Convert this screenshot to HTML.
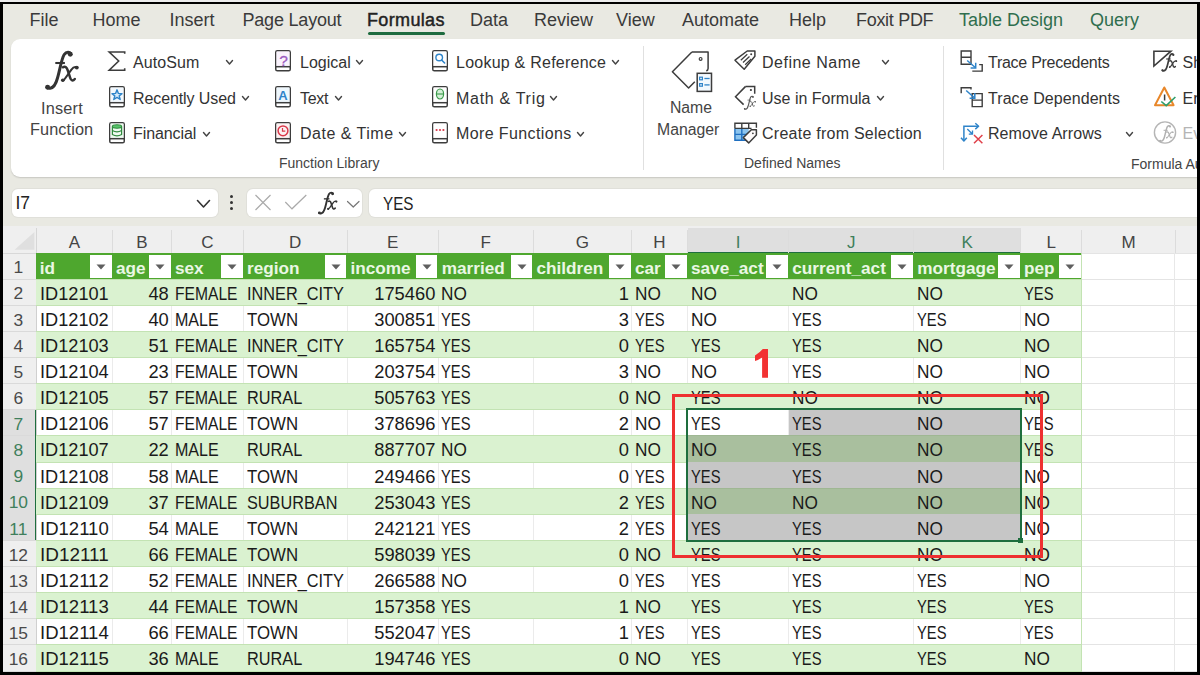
<!DOCTYPE html><html><head><meta charset="utf-8"><style>
*{box-sizing:border-box;margin:0;padding:0}
html,body{width:1200px;height:675px;overflow:hidden;background:#000;font-family:"Liberation Sans",sans-serif}
.a{position:absolute}
#app{position:absolute;left:3px;top:4px;width:1194px;height:668px;background:#e9e9e2;overflow:hidden}
.tab{position:absolute;height:34px;line-height:34px;font-size:18px;color:#3a3a3a;white-space:nowrap}
.rt{position:absolute;font-size:16px;color:#333;white-space:nowrap;line-height:20px}
.gl{position:absolute;font-size:14px;color:#444;white-space:nowrap;line-height:16px}
.c{position:absolute;font-size:17.8px;color:#1a1a1a;white-space:nowrap;line-height:26px;height:26px}
.c span{display:inline-block}
.hd{position:absolute;font-size:17.2px;font-weight:bold;color:#eaf7e4;white-space:nowrap;line-height:26px}
.ch{position:absolute;font-size:17px;color:#444;text-align:center;line-height:25px}
.rh{position:absolute;font-size:17.4px;color:#4a4a4a;text-align:center;line-height:26px}
svg{position:absolute;overflow:visible}
</style></head><body>
<div class="a" style="left:0;top:0;width:1200px;height:2px;background:#ececec"></div>
<div id="app">

<div class="tab" style="left:26.50px;top:-1.00px;">File</div>
<div class="tab" style="left:89.50px;top:-1.00px;">Home</div>
<div class="tab" style="left:166.50px;top:-1.00px;">Insert</div>
<div class="tab" style="left:239.50px;top:-1.00px;letter-spacing:-0.2px;">Page Layout</div>
<div class="tab" style="left:364.00px;top:-1.00px;color:#222;-webkit-text-stroke:0.45px #222;letter-spacing:0.35px;">Formulas</div>
<div class="tab" style="left:467.00px;top:-1.00px;">Data</div>
<div class="tab" style="left:531.00px;top:-1.00px;">Review</div>
<div class="tab" style="left:613.00px;top:-1.00px;">View</div>
<div class="tab" style="left:679.00px;top:-1.00px;">Automate</div>
<div class="tab" style="left:786.00px;top:-1.00px;">Help</div>
<div class="tab" style="left:853.00px;top:-1.00px;letter-spacing:-0.3px;">Foxit PDF</div>
<div class="tab" style="left:956.00px;top:-1.00px;color:#2f6e4e;">Table Design</div>
<div class="tab" style="left:1087.00px;top:-1.00px;color:#2f6e4e;">Query</div>
<div class="a" style="left:365.00px;top:28.20px;width:77.30px;height:2.80px;background:#1e6b3f;border-radius:2px"></div>
<div class="a" style="left:8.00px;top:35.00px;width:1289.00px;height:137.80px;background:#fff;border-radius:9px;box-shadow:0 1px 1.5px rgba(0,0,0,.15)"></div>
<svg style="left:37.00px;top:42.00px" width="44.00" height="46.00" viewBox="0 0 44 46"><path d="M30.6 8.2 C30 5.8 26.5 5.2 24.2 8.5 C21.6 12.5 19.8 24 17.5 32 C15.8 38.5 13.5 41.8 10.2 42.2 C8.6 42.4 7.5 41.8 7.2 41.2" fill="none" stroke="#333" stroke-width="2.9899999999999998" stroke-linecap="round"/><circle cx="30.3" cy="8.2" r="2.4699999999999998" fill="#333"/><circle cx="7.6" cy="41.2" r="2.4699999999999998" fill="#333"/><path d="M15.3 17 H24.9" stroke="#333" stroke-width="2.08"/><path d="M22.8 21.3 C25.5 20 26.8 21.5 27.8 24.5 L30.2 31.8 C31 34.5 32.8 35.4 34.8 33" fill="none" stroke="#333" stroke-width="2.4699999999999998" stroke-linecap="round"/><path d="M37 21.5 C35 20.3 33.2 21.2 31.2 23.8 L25.8 31.5 C24.5 33.6 23.3 34.8 22.3 34.2" fill="none" stroke="#333" stroke-width="2.08" stroke-linecap="round"/><circle cx="36.8" cy="21.6" r="1.9500000000000002" fill="#333"/><circle cx="22.8" cy="34.3" r="1.8199999999999998" fill="#333"/></svg>
<div class="rt" style="left:37.00px;top:93.50px;font-size:16.3px;color:#444;width:44px;text-align:center;letter-spacing:0.2px">Insert</div>
<div class="rt" style="left:27.00px;top:114.50px;font-size:16.3px;color:#444;letter-spacing:0.1px">Function</div>
<svg style="left:103.00px;top:45.00px" width="22" height="24" viewBox="106 49 22 24"><path d="M124.7 53.8 V52 H109.2 L118.7 61 L109.2 70.2 H124.7 V68.2" fill="none" stroke="#3d3d3d" stroke-width="1.6" stroke-linejoin="miter"/></svg>
<div class="rt" style="left:130.00px;top:48.80px;letter-spacing:0.1px">AutoSum</div>
<svg style="left:221.00px;top:54.30px" width="11" height="8.5" viewBox="224 58.3 11 8.5"><path d="M226.5 60.8 L229.5 64.3 L232.5 60.8" fill="none" stroke="#444" stroke-width="1.4" stroke-linecap="round" stroke-linejoin="round"/></svg>
<svg style="left:104.80px;top:81.00px" width="18.0" height="23.5" viewBox="107.8 85 18.0 23.5"><rect x="109.55" y="86.75" width="14.5" height="20.0" rx="1.6" fill="#fff" stroke="#3d3d3d" stroke-width="1.5"/><rect x="110.3" y="87.5" width="13.0" height="15.2" fill="#f3f9fe"/><path d="M109.55 102.7 H124.05" stroke="#3d3d3d" stroke-width="1.5"/><path d="M116.8 89.8 L118.2 93.4 L121.8 93.6 L119 95.9 L120 99.5 L116.8 97.4 L113.6 99.5 L114.6 95.9 L111.8 93.6 L115.4 93.4 Z" fill="#d7ecfb" stroke="#2f84c9" stroke-width="1.4" stroke-linejoin="round"/></svg>
<div class="rt" style="left:130.00px;top:84.80px;letter-spacing:-0.1px">Recently Used</div>
<svg style="left:237.00px;top:90.30px" width="11" height="8.5" viewBox="240 94.3 11 8.5"><path d="M242.5 96.8 L245.5 100.3 L248.5 96.8" fill="none" stroke="#444" stroke-width="1.4" stroke-linecap="round" stroke-linejoin="round"/></svg>
<svg style="left:104.80px;top:116.80px" width="18.0" height="23.500000000000014" viewBox="107.8 120.8 18.0 23.500000000000014"><rect x="109.55" y="122.55" width="14.5" height="20.000000000000014" rx="1.6" fill="#fff" stroke="#3d3d3d" stroke-width="1.5"/><rect x="110.3" y="123.3" width="13.0" height="15.200000000000014" fill="#eefaf0"/><path d="M109.55 138.5 H124.05" stroke="#3d3d3d" stroke-width="1.5"/><ellipse cx="116.8" cy="126.3" rx="4.6" ry="1.7" fill="#58c46a" stroke="#2f8a3d" stroke-width="1.1"/><path d="M112.2 126.3 V134.2 Q116.8 137 121.4 134.2 V126.3 M112.2 130.3 Q116.8 133 121.4 130.3" fill="none" stroke="#2f8a3d" stroke-width="1.2"/></svg>
<div class="rt" style="left:130.00px;top:119.80px;letter-spacing:-0.1px">Financial</div>
<svg style="left:198.00px;top:125.80px" width="11" height="8.5" viewBox="201 129.8 11 8.5"><path d="M203.5 132.3 L206.5 135.8 L209.5 132.3" fill="none" stroke="#444" stroke-width="1.4" stroke-linecap="round" stroke-linejoin="round"/></svg>
<svg style="left:271.10px;top:45.20px" width="18.0" height="23.5" viewBox="274.1 49.2 18.0 23.5"><rect x="275.85" y="50.95" width="14.5" height="20.0" rx="1.6" fill="#fff" stroke="#3d3d3d" stroke-width="1.5"/><rect x="276.6" y="51.7" width="13.0" height="15.2" fill="#faf3fd"/><path d="M275.85 66.9 H290.35" stroke="#3d3d3d" stroke-width="1.5"/><text x="283.6" y="66" text-anchor="middle" font-size="15.5" font-family="Liberation Sans" fill="#9a5bc0" stroke="#9a5bc0" stroke-width="0.3">?</text></svg>
<div class="rt" style="left:297.00px;top:48.80px;">Logical</div>
<svg style="left:351.00px;top:54.30px" width="11" height="8.5" viewBox="354 58.3 11 8.5"><path d="M356.5 60.8 L359.5 64.3 L362.5 60.8" fill="none" stroke="#444" stroke-width="1.4" stroke-linecap="round" stroke-linejoin="round"/></svg>
<svg style="left:271.10px;top:81.20px" width="18.0" height="23.5" viewBox="274.1 85.2 18.0 23.5"><rect x="275.85" y="86.95" width="14.5" height="20.0" rx="1.6" fill="#fff" stroke="#3d3d3d" stroke-width="1.5"/><rect x="276.6" y="87.7" width="13.0" height="15.2" fill="#eef7fd"/><path d="M275.85 102.9 H290.35" stroke="#3d3d3d" stroke-width="1.5"/><text x="283.1" y="100.6" text-anchor="middle" font-size="13" font-weight="bold" font-family="Liberation Sans" fill="#2f84c9">A</text></svg>
<div class="rt" style="left:297.00px;top:84.80px;letter-spacing:-0.3px">Text</div>
<svg style="left:330.00px;top:90.30px" width="11" height="8.5" viewBox="333 94.3 11 8.5"><path d="M335.5 96.8 L338.5 100.3 L341.5 96.8" fill="none" stroke="#444" stroke-width="1.4" stroke-linecap="round" stroke-linejoin="round"/></svg>
<svg style="left:271.10px;top:117.20px" width="18.0" height="23.499999999999986" viewBox="274.1 121.2 18.0 23.499999999999986"><rect x="275.85" y="122.95" width="14.5" height="19.999999999999986" rx="1.6" fill="#fff" stroke="#3d3d3d" stroke-width="1.5"/><rect x="276.6" y="123.7" width="13.0" height="15.199999999999985" fill="#fdf1f2"/><path d="M275.85 138.89999999999998 H290.35" stroke="#3d3d3d" stroke-width="1.5"/><circle cx="283.1" cy="131" r="4.9" fill="none" stroke="#d9394a" stroke-width="1.5"/><path d="M282.6 128.2 V131.4 H285.4" fill="none" stroke="#d9394a" stroke-width="1.2"/></svg>
<div class="rt" style="left:297.00px;top:119.80px;letter-spacing:0.5px">Date &amp; Time</div>
<svg style="left:394.00px;top:125.80px" width="11" height="8.5" viewBox="397 129.8 11 8.5"><path d="M399.5 132.3 L402.5 135.8 L405.5 132.3" fill="none" stroke="#444" stroke-width="1.4" stroke-linecap="round" stroke-linejoin="round"/></svg>
<svg style="left:427.60px;top:45.10px" width="18.0" height="23.499999999999993" viewBox="430.6 49.1 18.0 23.499999999999993"><rect x="432.35" y="50.85" width="14.5" height="19.999999999999993" rx="1.6" fill="#fff" stroke="#3d3d3d" stroke-width="1.5"/><rect x="433.1" y="51.6" width="13.0" height="15.199999999999992" fill="#fff"/><path d="M432.35 66.8 H446.85" stroke="#3d3d3d" stroke-width="1.5"/><circle cx="438.8" cy="57.6" r="3.3" fill="none" stroke="#2f84c9" stroke-width="1.4"/><path d="M441.2 60.1 L444.2 63.1" stroke="#2f84c9" stroke-width="1.6" stroke-linecap="round"/></svg>
<div class="rt" style="left:453.00px;top:48.80px;letter-spacing:0.24px">Lookup &amp; Reference</div>
<svg style="left:607.00px;top:54.30px" width="11" height="8.5" viewBox="610 58.3 11 8.5"><path d="M612.5 60.8 L615.5 64.3 L618.5 60.8" fill="none" stroke="#444" stroke-width="1.4" stroke-linecap="round" stroke-linejoin="round"/></svg>
<svg style="left:427.60px;top:80.80px" width="18.0" height="23.5" viewBox="430.6 84.8 18.0 23.5"><rect x="432.35" y="86.55" width="14.5" height="20.0" rx="1.6" fill="#fff" stroke="#3d3d3d" stroke-width="1.5"/><rect x="433.1" y="87.3" width="13.0" height="15.2" fill="#fff"/><path d="M432.35 102.5 H446.85" stroke="#3d3d3d" stroke-width="1.5"/><ellipse cx="439.6" cy="93.8" rx="3.6" ry="5" fill="#d5f0d8" stroke="#3a9a4a" stroke-width="1.2"/><path d="M436 93.8 H443.2" stroke="#3a9a4a" stroke-width="1.1"/></svg>
<div class="rt" style="left:453.00px;top:84.80px;letter-spacing:0.7px">Math &amp; Trig</div>
<svg style="left:545.00px;top:90.30px" width="11" height="8.5" viewBox="548 94.3 11 8.5"><path d="M550.5 96.8 L553.5 100.3 L556.5 96.8" fill="none" stroke="#444" stroke-width="1.4" stroke-linecap="round" stroke-linejoin="round"/></svg>
<svg style="left:427.60px;top:116.80px" width="18.0" height="23.500000000000014" viewBox="430.6 120.8 18.0 23.500000000000014"><rect x="432.35" y="122.55" width="14.5" height="20.000000000000014" rx="1.6" fill="#fff" stroke="#3d3d3d" stroke-width="1.5"/><rect x="433.1" y="123.3" width="13.0" height="15.200000000000014" fill="#fff"/><path d="M432.35 138.5 H446.85" stroke="#3d3d3d" stroke-width="1.5"/><circle cx="436.2" cy="129.8" r="1.1" fill="#d9394a"/><circle cx="439.6" cy="129.8" r="1.1" fill="#d9394a"/><circle cx="443" cy="129.8" r="1.1" fill="#d9394a"/></svg>
<div class="rt" style="left:453.00px;top:119.80px;letter-spacing:0.38px">More Functions</div>
<svg style="left:572.00px;top:125.80px" width="11" height="8.5" viewBox="575 129.8 11 8.5"><path d="M577.5 132.3 L580.5 135.8 L583.5 132.3" fill="none" stroke="#444" stroke-width="1.4" stroke-linecap="round" stroke-linejoin="round"/></svg>
<div class="gl" style="left:276.00px;top:151.00px;">Function Library</div>
<div class="a" style="left:640.00px;top:42.00px;width:1.00px;height:124.00px;background:#e0e0e0"></div>
<svg style="left:665.00px;top:44.00px" width="48" height="47" viewBox="668 48 48 47"><path d="M691.9 51.9 H708.1 V68.6 Q708.1 70.5 706.2 70.8" fill="none" stroke="#3d3d3d" stroke-width="1.5" stroke-linejoin="round"/><path d="M691.9 51.9 L672.4 71.8 L688.6 88 L694.8 81.7" fill="none" stroke="#3d3d3d" stroke-width="1.5" stroke-linejoin="round"/><circle cx="700.6" cy="58.9" r="1.4" fill="none" stroke="#3d3d3d" stroke-width="1.2"/><rect x="697.2" y="73.3" width="14.3" height="18.1" fill="#f3f9fe" stroke="#3d3d3d" stroke-width="1.5"/><rect x="699.6" y="77.2" width="2.8" height="2.6" fill="none" stroke="#2f84c9" stroke-width="1.2"/><path d="M704.4 78.5 H709.6" stroke="#2f84c9" stroke-width="1.3"/><rect x="699.6" y="83.6" width="2.8" height="2.6" fill="none" stroke="#2f84c9" stroke-width="1.2"/><path d="M704.4 84.9 H709.6" stroke="#2f84c9" stroke-width="1.3"/></svg>
<div class="rt" style="left:658.00px;top:94.00px;font-size:15.8px;color:#444;width:60px;text-align:center">Name</div>
<div class="rt" style="left:654.00px;top:116.00px;font-size:15.8px;color:#444">Manager</div>
<svg style="left:729.00px;top:44.00px" width="26" height="25" viewBox="732 48 26 25"><path d="M747.2 51 H754.9 V56.3 L744.2 69.2 L735 60.2 Z" fill="#fff" stroke="#3d3d3d" stroke-width="1.5" stroke-linejoin="round"/><circle cx="751.2" cy="54.3" r="1" fill="#3d3d3d"/><path d="M740.8 60.2 L747.3 54.2 M743 62.5 L749.5 56.5 M745.2 64.8 L751.2 59" stroke="#3d3d3d" stroke-width="1.25"/></svg>
<div class="rt" style="left:759.00px;top:48.80px;letter-spacing:0.5px">Define Name</div>
<svg style="left:877.00px;top:54.30px" width="11" height="8.5" viewBox="880 58.3 11 8.5"><path d="M882.5 60.8 L885.5 64.3 L888.5 60.8" fill="none" stroke="#444" stroke-width="1.4" stroke-linecap="round" stroke-linejoin="round"/></svg>
<svg style="left:729.00px;top:80.00px" width="28" height="26" viewBox="732 84 28 26"><path d="M745.6 86.4 H754.7 V93.8" fill="none" stroke="#3d3d3d" stroke-width="1.5" stroke-linejoin="miter"/><path d="M745.6 86.4 L735.5 96.7 L743.6 104.6" fill="none" stroke="#3d3d3d" stroke-width="1.5" stroke-linejoin="miter"/><circle cx="750.9" cy="90" r="1.1" fill="#3d3d3d"/></svg>
<svg style="left:739.00px;top:89.60px" width="15.84" height="16.56" viewBox="0 0 44 46"><path d="M30.6 8.2 C30 5.8 26.5 5.2 24.2 8.5 C21.6 12.5 19.8 24 17.5 32 C15.8 38.5 13.5 41.8 10.2 42.2 C8.6 42.4 7.5 41.8 7.2 41.2" fill="none" stroke="#555" stroke-width="3.105" stroke-linecap="round"/><circle cx="30.3" cy="8.2" r="2.4699999999999998" fill="#555"/><circle cx="7.6" cy="41.2" r="2.4699999999999998" fill="#555"/><path d="M15.3 17 H24.9" stroke="#555" stroke-width="2.16"/><path d="M22.8 21.3 C25.5 20 26.8 21.5 27.8 24.5 L30.2 31.8 C31 34.5 32.8 35.4 34.8 33" fill="none" stroke="#555" stroke-width="2.565" stroke-linecap="round"/><path d="M37 21.5 C35 20.3 33.2 21.2 31.2 23.8 L25.8 31.5 C24.5 33.6 23.3 34.8 22.3 34.2" fill="none" stroke="#555" stroke-width="2.16" stroke-linecap="round"/><circle cx="36.8" cy="21.6" r="1.9500000000000002" fill="#555"/><circle cx="22.8" cy="34.3" r="1.8199999999999998" fill="#555"/></svg>
<div class="rt" style="left:759.00px;top:84.80px;">Use in Formula</div>
<svg style="left:872.00px;top:90.30px" width="11" height="8.5" viewBox="875 94.3 11 8.5"><path d="M877.5 96.8 L880.5 100.3 L883.5 96.8" fill="none" stroke="#444" stroke-width="1.4" stroke-linecap="round" stroke-linejoin="round"/></svg>
<svg style="left:729.00px;top:116.00px" width="28" height="26" viewBox="732 120 28 26"><rect x="734.9" y="128.4" width="13.8" height="11.8" fill="#8cc4ee"/><path d="M734.9 128.4 V140.2 H746 M734.9 134.4 H748 M741.8 128.4 V140.2" fill="none" stroke="#1f6fc0" stroke-width="1.4"/><path d="M734.9 128.4 V123.3 H756.4 V127.8 M734.9 128.4 H751.5 M741.8 123.3 V128.4 M748.7 123.3 V128.4" fill="none" stroke="#3d3d3d" stroke-width="1.4"/><path d="M743.3 137.6 L751.3 129.8 H756.4 V135 L748.7 142.9 Z" fill="#fdfafa" stroke="#3d3d3d" stroke-width="1.5" stroke-linejoin="round"/><circle cx="752.9" cy="133.3" r="0.9" fill="#3d3d3d"/></svg>
<div class="rt" style="left:759.00px;top:119.80px;letter-spacing:0.25px">Create from Selection</div>
<div class="gl" style="left:741.00px;top:151.00px;">Defined Names</div>
<div class="a" style="left:940.00px;top:42.00px;width:1.00px;height:124.00px;background:#e0e0e0"></div>
<svg style="left:955.00px;top:44.00px" width="28" height="26" viewBox="958 48 28 26"><path d="M961.2 51 H971 V64.2 H961.2 Z M961.2 57.3 H971" fill="none" stroke="#3d3d3d" stroke-width="1.4"/><path d="M972.3 71.1 H982.2 V64.6 H979.2" fill="none" stroke="#3d3d3d" stroke-width="1.4"/><path d="M967.2 60.5 L975.3 67.5" stroke="#2f84c9" stroke-width="1.5"/><path d="M970.6 67.9 H975.7 V62.8" fill="none" stroke="#2f84c9" stroke-width="1.5"/></svg>
<div class="rt" style="left:985.00px;top:48.80px;letter-spacing:-0.27px">Trace Precedents</div>
<svg style="left:955.00px;top:80.00px" width="28" height="26" viewBox="958 84 28 26"><path d="M961.2 93.3 V87.7 H971 V89.5" fill="none" stroke="#3d3d3d" stroke-width="1.4"/><path d="M972.2 93.6 H982.2 V106.6 H972.2 Z M972.2 100.1 H982.2" fill="none" stroke="#3d3d3d" stroke-width="1.4"/><path d="M966.2 90.5 L974.4 97.8" stroke="#2f84c9" stroke-width="1.5"/><path d="M969.6 98.2 H974.8 V93" fill="none" stroke="#2f84c9" stroke-width="1.5"/></svg>
<div class="rt" style="left:985.00px;top:84.80px;letter-spacing:0.07px">Trace Dependents</div>
<svg style="left:954.00px;top:116.00px" width="29" height="26" viewBox="957 120 29 26"><path d="M963.9 140.5 V126.2 H978.3" fill="none" stroke="#2f84c9" stroke-width="1.5"/><path d="M961 137.8 L963.9 141 L966.8 137.8 M975.3 123.3 L978.6 126.2 L975.3 129.1" fill="none" stroke="#2f84c9" stroke-width="1.5" stroke-linejoin="round"/><path d="M967.3 129 L972.3 134 M968.8 134.2 H972.5 V130.5" fill="none" stroke="#2f84c9" stroke-width="1.3"/><path d="M974 135 L982.4 143.2 M982.4 135 L974 143.2" stroke="#e0404a" stroke-width="1.5"/></svg>
<div class="rt" style="left:985.00px;top:119.80px;letter-spacing:0.07px">Remove Arrows</div>
<svg style="left:1121.00px;top:125.80px" width="11" height="8.5" viewBox="1124 129.8 11 8.5"><path d="M1126.5 132.3 L1129.5 135.8 L1132.5 132.3" fill="none" stroke="#444" stroke-width="1.4" stroke-linecap="round" stroke-linejoin="round"/></svg>
<svg style="left:1147.00px;top:44.00px" width="30" height="28" viewBox="1150 48 30 28"><path d="M1153.9 51.2 H1170.9 L1153.9 66 Z" fill="none" stroke="#3d3d3d" stroke-width="1.6" stroke-linejoin="miter"/></svg>
<svg style="left:1155.60px;top:47.40px" width="20.68" height="21.62" viewBox="0 0 44 46"><path d="M30.6 8.2 C30 5.8 26.5 5.2 24.2 8.5 C21.6 12.5 19.8 24 17.5 32 C15.8 38.5 13.5 41.8 10.2 42.2 C8.6 42.4 7.5 41.8 7.2 41.2" fill="none" stroke="#3d3d3d" stroke-width="3.6799999999999997" stroke-linecap="round"/><circle cx="30.3" cy="8.2" r="2.4699999999999998" fill="#3d3d3d"/><circle cx="7.6" cy="41.2" r="2.4699999999999998" fill="#3d3d3d"/><path d="M15.3 17 H24.9" stroke="#3d3d3d" stroke-width="2.5600000000000005"/><path d="M22.8 21.3 C25.5 20 26.8 21.5 27.8 24.5 L30.2 31.8 C31 34.5 32.8 35.4 34.8 33" fill="none" stroke="#3d3d3d" stroke-width="3.04" stroke-linecap="round"/><path d="M37 21.5 C35 20.3 33.2 21.2 31.2 23.8 L25.8 31.5 C24.5 33.6 23.3 34.8 22.3 34.2" fill="none" stroke="#3d3d3d" stroke-width="2.5600000000000005" stroke-linecap="round"/><circle cx="36.8" cy="21.6" r="1.9500000000000002" fill="#3d3d3d"/><circle cx="22.8" cy="34.3" r="1.8199999999999998" fill="#3d3d3d"/></svg>
<div class="rt" style="left:1179.50px;top:48.80px;">Sh</div>
<svg style="left:1148.00px;top:80.00px" width="29" height="26" viewBox="1151 84 29 26"><path d="M1164.3 87.5 L1173.6 105.2 H1155 Z" fill="none" stroke="#e8872a" stroke-width="2" stroke-linejoin="round"/><path d="M1164.6 94.5 V100.5" stroke="#3d3d3d" stroke-width="1.5"/><path d="M1161.3 101.5 L1166.2 105.6 L1175.4 97" fill="none" stroke="#2e9e6b" stroke-width="1.6"/></svg>
<div class="rt" style="left:1179.50px;top:84.80px;">Er</div>
<svg style="left:1147.00px;top:114.00px" width="30" height="30" viewBox="1150 118 30 30"><circle cx="1165" cy="132.5" r="10.6" fill="none" stroke="#b5b5b5" stroke-width="1.4"/></svg>
<svg style="left:1154.40px;top:118.80px" width="18.92" height="19.78" viewBox="0 0 44 46"><path d="M30.6 8.2 C30 5.8 26.5 5.2 24.2 8.5 C21.6 12.5 19.8 24 17.5 32 C15.8 38.5 13.5 41.8 10.2 42.2 C8.6 42.4 7.5 41.8 7.2 41.2" fill="none" stroke="#b0b0b0" stroke-width="3.4499999999999997" stroke-linecap="round"/><circle cx="30.3" cy="8.2" r="2.4699999999999998" fill="#b0b0b0"/><circle cx="7.6" cy="41.2" r="2.4699999999999998" fill="#b0b0b0"/><path d="M15.3 17 H24.9" stroke="#b0b0b0" stroke-width="2.4000000000000004"/><path d="M22.8 21.3 C25.5 20 26.8 21.5 27.8 24.5 L30.2 31.8 C31 34.5 32.8 35.4 34.8 33" fill="none" stroke="#b0b0b0" stroke-width="2.8499999999999996" stroke-linecap="round"/><path d="M37 21.5 C35 20.3 33.2 21.2 31.2 23.8 L25.8 31.5 C24.5 33.6 23.3 34.8 22.3 34.2" fill="none" stroke="#b0b0b0" stroke-width="2.4000000000000004" stroke-linecap="round"/><circle cx="36.8" cy="21.6" r="1.9500000000000002" fill="#b0b0b0"/><circle cx="22.8" cy="34.3" r="1.8199999999999998" fill="#b0b0b0"/></svg>
<div class="rt" style="left:1179.50px;top:119.80px;color:#b5b5b5">Ev</div>
<div class="gl" style="left:1128.00px;top:152.00px;">Formula Auditing</div>
<div class="a" style="left:9.00px;top:184.50px;width:205.50px;height:28.50px;background:#fff;border-radius:6px;box-shadow:0 0 0 1px #e0e0da"></div>
<div class="rt" style="left:12.50px;top:188.50px;font-size:17.5px;color:#222;line-height:20px">I7</div>
<svg style="left:192.00px;top:193.80px" width="17" height="11.5" viewBox="195 197.8 17 11.5"><path d="M197.5 200.3 L203.5 206.8 L209.5 200.3" fill="none" stroke="#333" stroke-width="1.6" stroke-linecap="round" stroke-linejoin="round"/></svg>
<div class="a" style="left:227.40px;top:191.40px;width:3.00px;height:3.00px;background:#333;border-radius:50%"></div>
<div class="a" style="left:227.40px;top:197.00px;width:3.00px;height:3.00px;background:#333;border-radius:50%"></div>
<div class="a" style="left:227.40px;top:202.60px;width:3.00px;height:3.00px;background:#333;border-radius:50%"></div>
<div class="a" style="left:244.00px;top:184.50px;width:114.50px;height:28.50px;background:#fff;border-radius:6px;box-shadow:0 0 0 1px #e0e0da"></div>
<svg style="left:250.00px;top:189.00px" width="20" height="19" viewBox="253 193 20 19"><path d="M255.5 195 L270.5 210 M270.5 195 L255.5 210" stroke="#aaa" stroke-width="1.2"/></svg>
<svg style="left:280.00px;top:189.00px" width="25" height="18" viewBox="283 193 25 18"><path d="M285.3 202 L292 208.8 L306.3 195" fill="none" stroke="#aaa" stroke-width="1.2"/></svg>
<svg style="left:311.80px;top:184.80px" width="25.52" height="26.68" viewBox="0 0 44 46"><path d="M30.6 8.2 C30 5.8 26.5 5.2 24.2 8.5 C21.6 12.5 19.8 24 17.5 32 C15.8 38.5 13.5 41.8 10.2 42.2 C8.6 42.4 7.5 41.8 7.2 41.2" fill="none" stroke="#333" stroke-width="3.3349999999999995" stroke-linecap="round"/><circle cx="30.3" cy="8.2" r="2.4699999999999998" fill="#333"/><circle cx="7.6" cy="41.2" r="2.4699999999999998" fill="#333"/><path d="M15.3 17 H24.9" stroke="#333" stroke-width="2.32"/><path d="M22.8 21.3 C25.5 20 26.8 21.5 27.8 24.5 L30.2 31.8 C31 34.5 32.8 35.4 34.8 33" fill="none" stroke="#333" stroke-width="2.755" stroke-linecap="round"/><path d="M37 21.5 C35 20.3 33.2 21.2 31.2 23.8 L25.8 31.5 C24.5 33.6 23.3 34.8 22.3 34.2" fill="none" stroke="#333" stroke-width="2.32" stroke-linecap="round"/><circle cx="36.8" cy="21.6" r="1.9500000000000002" fill="#333"/><circle cx="22.8" cy="34.3" r="1.8199999999999998" fill="#333"/></svg>
<svg style="left:341.50px;top:194.50px" width="16.5" height="10.5" viewBox="344.5 198.5 16.5 10.5"><path d="M347.0 201.0 L352.75 206.5 L358.5 201.0" fill="none" stroke="#777" stroke-width="1.2" stroke-linecap="round" stroke-linejoin="round"/></svg>
<div class="a" style="left:366.00px;top:184.50px;width:881.00px;height:28.50px;background:#fff;border-radius:6px;box-shadow:0 0 0 1px #e0e0da"></div>
<div class="rt" style="left:380.00px;top:189.50px;font-size:17.5px;color:#222"><span style="display:inline-block;transform:scaleX(0.87);transform-origin:0 50%">YES</span></div>
<div class="a" style="left:0.00px;top:222.00px;width:1197.00px;height:27.00px;background:#efefef"></div>
<div class="a" style="left:0.00px;top:249.00px;width:33.30px;height:419.00px;background:#efefef"></div>
<div class="a" style="left:33.30px;top:249.00px;width:1163.70px;height:419.00px;background:#fff"></div>
<svg style="left:10.00px;top:226.00px" width="23" height="22" viewBox="13 230 23 22"><path d="M34.4 232 V249.8 H14.6 Z" fill="#dfdfdf"/></svg>
<div class="a" style="left:109.00px;top:226.00px;width:1.00px;height:23.00px;background:#dcdcdc"></div>
<div class="ch" style="left:33.30px;top:225.50px;width:76.20px;color:#444">A</div>
<div class="a" style="left:168.00px;top:226.00px;width:1.00px;height:23.00px;background:#dcdcdc"></div>
<div class="ch" style="left:109.50px;top:225.50px;width:59.00px;color:#444">B</div>
<div class="a" style="left:240.00px;top:226.00px;width:1.00px;height:23.00px;background:#dcdcdc"></div>
<div class="ch" style="left:168.50px;top:225.50px;width:72.00px;color:#444">C</div>
<div class="a" style="left:343.50px;top:226.00px;width:1.00px;height:23.00px;background:#dcdcdc"></div>
<div class="ch" style="left:240.50px;top:225.50px;width:103.50px;color:#444">D</div>
<div class="a" style="left:434.75px;top:226.00px;width:1.00px;height:23.00px;background:#dcdcdc"></div>
<div class="ch" style="left:344.00px;top:225.50px;width:91.25px;color:#444">E</div>
<div class="a" style="left:529.50px;top:226.00px;width:1.00px;height:23.00px;background:#dcdcdc"></div>
<div class="ch" style="left:435.25px;top:225.50px;width:94.75px;color:#444">F</div>
<div class="a" style="left:628.00px;top:226.00px;width:1.00px;height:23.00px;background:#dcdcdc"></div>
<div class="ch" style="left:530.00px;top:225.50px;width:98.50px;color:#444">G</div>
<div class="a" style="left:684.00px;top:226.00px;width:1.00px;height:23.00px;background:#dcdcdc"></div>
<div class="ch" style="left:628.50px;top:225.50px;width:56.00px;color:#444">H</div>
<div class="a" style="left:684.50px;top:223.50px;width:101.25px;height:25.50px;background:#dfdfdf"></div>
<div class="a" style="left:684.50px;top:247.50px;width:101.25px;height:1.50px;background:#1e6e3e"></div>
<div class="a" style="left:785.25px;top:226.00px;width:1.00px;height:23.00px;background:#dcdcdc"></div>
<div class="ch" style="left:684.50px;top:225.50px;width:101.25px;color:#3f7f5c">I</div>
<div class="a" style="left:785.75px;top:223.50px;width:125.00px;height:25.50px;background:#dfdfdf"></div>
<div class="a" style="left:785.75px;top:247.50px;width:125.00px;height:1.50px;background:#1e6e3e"></div>
<div class="a" style="left:910.25px;top:226.00px;width:1.00px;height:23.00px;background:#dcdcdc"></div>
<div class="ch" style="left:785.75px;top:225.50px;width:125.00px;color:#3f7f5c">J</div>
<div class="a" style="left:910.75px;top:223.50px;width:106.75px;height:25.50px;background:#dfdfdf"></div>
<div class="a" style="left:910.75px;top:247.50px;width:106.75px;height:1.50px;background:#1e6e3e"></div>
<div class="a" style="left:1017.00px;top:226.00px;width:1.00px;height:23.00px;background:#dcdcdc"></div>
<div class="ch" style="left:910.75px;top:225.50px;width:106.75px;color:#3f7f5c">K</div>
<div class="a" style="left:1078.25px;top:226.00px;width:1.00px;height:23.00px;background:#dcdcdc"></div>
<div class="ch" style="left:1017.50px;top:225.50px;width:61.25px;color:#444">L</div>
<div class="a" style="left:1172.00px;top:226.00px;width:1.00px;height:23.00px;background:#dcdcdc"></div>
<div class="ch" style="left:1078.75px;top:225.50px;width:93.75px;color:#444">M</div>
<div class="a" style="left:1266.50px;top:226.00px;width:1.00px;height:23.00px;background:#dcdcdc"></div>
<div class="ch" style="left:1172.50px;top:225.50px;width:94.50px;color:#444">N</div>
<div class="a" style="left:33.00px;top:224.00px;width:1.00px;height:25.00px;background:#d6d6d6"></div>
<div class="a" style="left:0.00px;top:248.50px;width:33.30px;height:1.00px;background:#d8d8d8"></div>
<div class="a" style="left:0.00px;top:274.62px;width:33.30px;height:1.00px;background:#dadada"></div>
<div class="rh" style="left:-1.20px;top:250.30px;width:33px;color:#4a4a4a">1</div>
<div class="a" style="left:0.00px;top:300.75px;width:33.30px;height:1.00px;background:#dadada"></div>
<div class="rh" style="left:-1.20px;top:276.43px;width:33px;color:#4a4a4a">2</div>
<div class="a" style="left:0.00px;top:326.88px;width:33.30px;height:1.00px;background:#dadada"></div>
<div class="rh" style="left:-1.20px;top:302.55px;width:33px;color:#4a4a4a">3</div>
<div class="a" style="left:0.00px;top:353.00px;width:33.30px;height:1.00px;background:#dadada"></div>
<div class="rh" style="left:-1.20px;top:328.68px;width:33px;color:#4a4a4a">4</div>
<div class="a" style="left:0.00px;top:379.12px;width:33.30px;height:1.00px;background:#dadada"></div>
<div class="rh" style="left:-1.20px;top:354.80px;width:33px;color:#4a4a4a">5</div>
<div class="a" style="left:0.00px;top:405.25px;width:33.30px;height:1.00px;background:#dadada"></div>
<div class="rh" style="left:-1.20px;top:380.93px;width:33px;color:#4a4a4a">6</div>
<div class="a" style="left:0.00px;top:405.75px;width:33.30px;height:26.12px;background:#dfdfdf"></div>
<div class="a" style="left:0.00px;top:431.38px;width:33.30px;height:1.00px;background:#dadada"></div>
<div class="rh" style="left:-1.20px;top:407.05px;width:33px;color:#3f7f5c">7</div>
<div class="a" style="left:0.00px;top:431.88px;width:33.30px;height:26.12px;background:#dfdfdf"></div>
<div class="a" style="left:0.00px;top:457.50px;width:33.30px;height:1.00px;background:#dadada"></div>
<div class="rh" style="left:-1.20px;top:433.18px;width:33px;color:#3f7f5c">8</div>
<div class="a" style="left:0.00px;top:458.00px;width:33.30px;height:26.12px;background:#dfdfdf"></div>
<div class="a" style="left:0.00px;top:483.62px;width:33.30px;height:1.00px;background:#dadada"></div>
<div class="rh" style="left:-1.20px;top:459.30px;width:33px;color:#3f7f5c">9</div>
<div class="a" style="left:0.00px;top:484.12px;width:33.30px;height:26.12px;background:#dfdfdf"></div>
<div class="a" style="left:0.00px;top:509.75px;width:33.30px;height:1.00px;background:#dadada"></div>
<div class="rh" style="left:-1.20px;top:485.43px;width:33px;color:#3f7f5c">10</div>
<div class="a" style="left:0.00px;top:510.25px;width:33.30px;height:26.12px;background:#dfdfdf"></div>
<div class="a" style="left:0.00px;top:535.88px;width:33.30px;height:1.00px;background:#dadada"></div>
<div class="rh" style="left:-1.20px;top:511.55px;width:33px;color:#3f7f5c">11</div>
<div class="a" style="left:0.00px;top:562.00px;width:33.30px;height:1.00px;background:#dadada"></div>
<div class="rh" style="left:-1.20px;top:537.67px;width:33px;color:#4a4a4a">12</div>
<div class="a" style="left:0.00px;top:588.12px;width:33.30px;height:1.00px;background:#dadada"></div>
<div class="rh" style="left:-1.20px;top:563.80px;width:33px;color:#4a4a4a">13</div>
<div class="a" style="left:0.00px;top:614.25px;width:33.30px;height:1.00px;background:#dadada"></div>
<div class="rh" style="left:-1.20px;top:589.92px;width:33px;color:#4a4a4a">14</div>
<div class="a" style="left:0.00px;top:640.38px;width:33.30px;height:1.00px;background:#dadada"></div>
<div class="rh" style="left:-1.20px;top:616.05px;width:33px;color:#4a4a4a">15</div>
<div class="a" style="left:0.00px;top:666.50px;width:33.30px;height:1.00px;background:#dadada"></div>
<div class="rh" style="left:-1.20px;top:642.17px;width:33px;color:#4a4a4a">16</div>
<div class="a" style="left:32.80px;top:249.00px;width:1.00px;height:419.00px;background:#d0d0d0"></div>
<div class="a" style="left:31.80px;top:405.75px;width:1.70px;height:130.65px;background:#1e6e3e"></div>
<div class="a" style="left:1078.75px;top:248.50px;width:118.25px;height:1.00px;background:#e4e4e4"></div>
<div class="a" style="left:1078.75px;top:274.62px;width:118.25px;height:1.00px;background:#e4e4e4"></div>
<div class="a" style="left:1078.75px;top:300.75px;width:118.25px;height:1.00px;background:#e4e4e4"></div>
<div class="a" style="left:1078.75px;top:326.88px;width:118.25px;height:1.00px;background:#e4e4e4"></div>
<div class="a" style="left:1078.75px;top:353.00px;width:118.25px;height:1.00px;background:#e4e4e4"></div>
<div class="a" style="left:1078.75px;top:379.12px;width:118.25px;height:1.00px;background:#e4e4e4"></div>
<div class="a" style="left:1078.75px;top:405.25px;width:118.25px;height:1.00px;background:#e4e4e4"></div>
<div class="a" style="left:1078.75px;top:431.38px;width:118.25px;height:1.00px;background:#e4e4e4"></div>
<div class="a" style="left:1078.75px;top:457.50px;width:118.25px;height:1.00px;background:#e4e4e4"></div>
<div class="a" style="left:1078.75px;top:483.62px;width:118.25px;height:1.00px;background:#e4e4e4"></div>
<div class="a" style="left:1078.75px;top:509.75px;width:118.25px;height:1.00px;background:#e4e4e4"></div>
<div class="a" style="left:1078.75px;top:535.88px;width:118.25px;height:1.00px;background:#e4e4e4"></div>
<div class="a" style="left:1078.75px;top:562.00px;width:118.25px;height:1.00px;background:#e4e4e4"></div>
<div class="a" style="left:1078.75px;top:588.12px;width:118.25px;height:1.00px;background:#e4e4e4"></div>
<div class="a" style="left:1078.75px;top:614.25px;width:118.25px;height:1.00px;background:#e4e4e4"></div>
<div class="a" style="left:1078.75px;top:640.38px;width:118.25px;height:1.00px;background:#e4e4e4"></div>
<div class="a" style="left:1078.75px;top:666.50px;width:118.25px;height:1.00px;background:#e4e4e4"></div>
<div class="a" style="left:1171.30px;top:249.00px;width:1.00px;height:419.00px;background:#e8e8e8"></div>
<div class="a" style="left:33.30px;top:249.00px;width:1045.45px;height:26.12px;background:#4ea72e"></div>
<div class="hd" style="left:36.80px;top:251.00px;">id</div>
<div class="a" style="left:87.00px;top:251.20px;width:21.70px;height:22.43px;background:#fff"></div>
<svg style="left:93.00px;top:260.00px" width="10.0" height="6.0" viewBox="96.0 264.0 10.0 6.0"><path d="M96.5 264.5 H105.5 L101.0 269.5 Z" fill="#5f5f5f"/></svg>
<div class="hd" style="left:113.00px;top:251.00px;">age</div>
<div class="a" style="left:146.00px;top:251.20px;width:21.70px;height:22.43px;background:#fff"></div>
<svg style="left:152.00px;top:260.00px" width="10.0" height="6.0" viewBox="155.0 264.0 10.0 6.0"><path d="M155.5 264.5 H164.5 L160.0 269.5 Z" fill="#5f5f5f"/></svg>
<div class="hd" style="left:172.00px;top:251.00px;">sex</div>
<div class="a" style="left:218.00px;top:251.20px;width:21.70px;height:22.43px;background:#fff"></div>
<svg style="left:224.00px;top:260.00px" width="10.0" height="6.0" viewBox="227.0 264.0 10.0 6.0"><path d="M227.5 264.5 H236.5 L232.0 269.5 Z" fill="#5f5f5f"/></svg>
<div class="hd" style="left:244.00px;top:251.00px;">region</div>
<div class="a" style="left:321.50px;top:251.20px;width:21.70px;height:22.43px;background:#fff"></div>
<svg style="left:327.50px;top:260.00px" width="10.0" height="6.0" viewBox="330.5 264.0 10.0 6.0"><path d="M331 264.5 H340 L335.5 269.5 Z" fill="#5f5f5f"/></svg>
<div class="hd" style="left:347.50px;top:251.00px;">income</div>
<div class="a" style="left:412.75px;top:251.20px;width:21.70px;height:22.43px;background:#fff"></div>
<svg style="left:418.75px;top:260.00px" width="10.0" height="6.0" viewBox="421.75 264.0 10.0 6.0"><path d="M422.25 264.5 H431.25 L426.75 269.5 Z" fill="#5f5f5f"/></svg>
<div class="hd" style="left:438.75px;top:251.00px;">married</div>
<div class="a" style="left:507.50px;top:251.20px;width:21.70px;height:22.43px;background:#fff"></div>
<svg style="left:513.50px;top:260.00px" width="10.0" height="6.0" viewBox="516.5 264.0 10.0 6.0"><path d="M517 264.5 H526 L521.5 269.5 Z" fill="#5f5f5f"/></svg>
<div class="hd" style="left:533.50px;top:251.00px;">children</div>
<div class="a" style="left:606.00px;top:251.20px;width:21.70px;height:22.43px;background:#fff"></div>
<svg style="left:612.00px;top:260.00px" width="10.0" height="6.0" viewBox="615.0 264.0 10.0 6.0"><path d="M615.5 264.5 H624.5 L620.0 269.5 Z" fill="#5f5f5f"/></svg>
<div class="hd" style="left:632.00px;top:251.00px;">car</div>
<div class="a" style="left:662.00px;top:251.20px;width:21.70px;height:22.43px;background:#fff"></div>
<svg style="left:668.00px;top:260.00px" width="10.0" height="6.0" viewBox="671.0 264.0 10.0 6.0"><path d="M671.5 264.5 H680.5 L676.0 269.5 Z" fill="#5f5f5f"/></svg>
<div class="hd" style="left:688.00px;top:251.00px;">save_act</div>
<div class="a" style="left:763.25px;top:251.20px;width:21.70px;height:22.43px;background:#fff"></div>
<svg style="left:769.25px;top:260.00px" width="10.0" height="6.0" viewBox="772.25 264.0 10.0 6.0"><path d="M772.75 264.5 H781.75 L777.25 269.5 Z" fill="#5f5f5f"/></svg>
<div class="hd" style="left:789.25px;top:251.00px;">current_act</div>
<div class="a" style="left:888.25px;top:251.20px;width:21.70px;height:22.43px;background:#fff"></div>
<svg style="left:894.25px;top:260.00px" width="10.0" height="6.0" viewBox="897.25 264.0 10.0 6.0"><path d="M897.75 264.5 H906.75 L902.25 269.5 Z" fill="#5f5f5f"/></svg>
<div class="hd" style="left:914.25px;top:251.00px;">mortgage</div>
<div class="a" style="left:995.00px;top:251.20px;width:21.70px;height:22.43px;background:#fff"></div>
<svg style="left:1001.00px;top:260.00px" width="10.0" height="6.0" viewBox="1004.0 264.0 10.0 6.0"><path d="M1004.5 264.5 H1013.5 L1009.0 269.5 Z" fill="#5f5f5f"/></svg>
<div class="hd" style="left:1021.00px;top:251.00px;">pep</div>
<div class="a" style="left:1056.25px;top:251.20px;width:21.70px;height:22.43px;background:#fff"></div>
<svg style="left:1062.25px;top:260.00px" width="10.0" height="6.0" viewBox="1065.25 264.0 10.0 6.0"><path d="M1065.75 264.5 H1074.75 L1070.25 269.5 Z" fill="#5f5f5f"/></svg>
<div class="a" style="left:33.30px;top:275.12px;width:1045.45px;height:26.12px;background:#daf2d0"></div>
<div class="a" style="left:33.30px;top:274.62px;width:1045.45px;height:1.00px;background:#c3e3b3"></div>
<div class="a" style="left:33.30px;top:300.75px;width:1045.45px;height:1.00px;background:#c3e3b3"></div>
<div class="c" style="left:36.50px;top:276.73px"><span style="transform:scaleX(1.022);transform-origin:0 50%">ID12101</span></div>
<div class="c" style="left:109.50px;top:276.73px;width:56.00px;text-align:right"><span style="transform:scaleX(1.030);transform-origin:100% 50%">48</span></div>
<div class="c" style="left:171.70px;top:276.73px"><span style="transform:scaleX(0.879);transform-origin:0 50%">FEMALE</span></div>
<div class="c" style="left:243.70px;top:276.73px"><span style="transform:scaleX(0.916);transform-origin:0 50%">INNER_CITY</span></div>
<div class="c" style="left:344.00px;top:276.73px;width:88.25px;text-align:right"><span style="transform:scaleX(1.030);transform-origin:100% 50%">175460</span></div>
<div class="c" style="left:438.45px;top:276.73px"><span style="transform:scaleX(0.970);transform-origin:0 50%">NO</span></div>
<div class="c" style="left:530.00px;top:276.73px;width:95.50px;text-align:right"><span style="transform:scaleX(1.030);transform-origin:100% 50%">1</span></div>
<div class="c" style="left:631.70px;top:276.73px"><span style="transform:scaleX(0.970);transform-origin:0 50%">NO</span></div>
<div class="c" style="left:687.70px;top:276.73px"><span style="transform:scaleX(0.970);transform-origin:0 50%">NO</span></div>
<div class="c" style="left:788.95px;top:276.73px"><span style="transform:scaleX(0.970);transform-origin:0 50%">NO</span></div>
<div class="c" style="left:913.95px;top:276.73px"><span style="transform:scaleX(0.970);transform-origin:0 50%">NO</span></div>
<div class="c" style="left:1020.70px;top:276.73px"><span style="transform:scaleX(0.830);transform-origin:0 50%">YES</span></div>
<div class="a" style="left:109.00px;top:301.75px;width:1.00px;height:25.12px;background:#ebebeb"></div>
<div class="a" style="left:168.00px;top:301.75px;width:1.00px;height:25.12px;background:#ebebeb"></div>
<div class="a" style="left:240.00px;top:301.75px;width:1.00px;height:25.12px;background:#ebebeb"></div>
<div class="a" style="left:343.50px;top:301.75px;width:1.00px;height:25.12px;background:#ebebeb"></div>
<div class="a" style="left:434.75px;top:301.75px;width:1.00px;height:25.12px;background:#ebebeb"></div>
<div class="a" style="left:529.50px;top:301.75px;width:1.00px;height:25.12px;background:#ebebeb"></div>
<div class="a" style="left:628.00px;top:301.75px;width:1.00px;height:25.12px;background:#ebebeb"></div>
<div class="a" style="left:684.00px;top:301.75px;width:1.00px;height:25.12px;background:#ebebeb"></div>
<div class="a" style="left:785.25px;top:301.75px;width:1.00px;height:25.12px;background:#ebebeb"></div>
<div class="a" style="left:910.25px;top:301.75px;width:1.00px;height:25.12px;background:#ebebeb"></div>
<div class="a" style="left:1017.00px;top:301.75px;width:1.00px;height:25.12px;background:#ebebeb"></div>
<div class="c" style="left:36.50px;top:302.85px"><span style="transform:scaleX(1.022);transform-origin:0 50%">ID12102</span></div>
<div class="c" style="left:109.50px;top:302.85px;width:56.00px;text-align:right"><span style="transform:scaleX(1.030);transform-origin:100% 50%">40</span></div>
<div class="c" style="left:171.70px;top:302.85px"><span style="transform:scaleX(0.902);transform-origin:0 50%">MALE</span></div>
<div class="c" style="left:243.70px;top:302.85px"><span style="transform:scaleX(0.945);transform-origin:0 50%">TOWN</span></div>
<div class="c" style="left:344.00px;top:302.85px;width:88.25px;text-align:right"><span style="transform:scaleX(1.030);transform-origin:100% 50%">300851</span></div>
<div class="c" style="left:438.45px;top:302.85px"><span style="transform:scaleX(0.830);transform-origin:0 50%">YES</span></div>
<div class="c" style="left:530.00px;top:302.85px;width:95.50px;text-align:right"><span style="transform:scaleX(1.030);transform-origin:100% 50%">3</span></div>
<div class="c" style="left:631.70px;top:302.85px"><span style="transform:scaleX(0.830);transform-origin:0 50%">YES</span></div>
<div class="c" style="left:687.70px;top:302.85px"><span style="transform:scaleX(0.970);transform-origin:0 50%">NO</span></div>
<div class="c" style="left:788.95px;top:302.85px"><span style="transform:scaleX(0.830);transform-origin:0 50%">YES</span></div>
<div class="c" style="left:913.95px;top:302.85px"><span style="transform:scaleX(0.830);transform-origin:0 50%">YES</span></div>
<div class="c" style="left:1020.70px;top:302.85px"><span style="transform:scaleX(0.970);transform-origin:0 50%">NO</span></div>
<div class="a" style="left:33.30px;top:327.38px;width:1045.45px;height:26.12px;background:#daf2d0"></div>
<div class="a" style="left:33.30px;top:326.88px;width:1045.45px;height:1.00px;background:#c3e3b3"></div>
<div class="a" style="left:33.30px;top:353.00px;width:1045.45px;height:1.00px;background:#c3e3b3"></div>
<div class="c" style="left:36.50px;top:328.98px"><span style="transform:scaleX(1.022);transform-origin:0 50%">ID12103</span></div>
<div class="c" style="left:109.50px;top:328.98px;width:56.00px;text-align:right"><span style="transform:scaleX(1.030);transform-origin:100% 50%">51</span></div>
<div class="c" style="left:171.70px;top:328.98px"><span style="transform:scaleX(0.879);transform-origin:0 50%">FEMALE</span></div>
<div class="c" style="left:243.70px;top:328.98px"><span style="transform:scaleX(0.916);transform-origin:0 50%">INNER_CITY</span></div>
<div class="c" style="left:344.00px;top:328.98px;width:88.25px;text-align:right"><span style="transform:scaleX(1.030);transform-origin:100% 50%">165754</span></div>
<div class="c" style="left:438.45px;top:328.98px"><span style="transform:scaleX(0.830);transform-origin:0 50%">YES</span></div>
<div class="c" style="left:530.00px;top:328.98px;width:95.50px;text-align:right"><span style="transform:scaleX(1.030);transform-origin:100% 50%">0</span></div>
<div class="c" style="left:631.70px;top:328.98px"><span style="transform:scaleX(0.830);transform-origin:0 50%">YES</span></div>
<div class="c" style="left:687.70px;top:328.98px"><span style="transform:scaleX(0.830);transform-origin:0 50%">YES</span></div>
<div class="c" style="left:788.95px;top:328.98px"><span style="transform:scaleX(0.830);transform-origin:0 50%">YES</span></div>
<div class="c" style="left:913.95px;top:328.98px"><span style="transform:scaleX(0.970);transform-origin:0 50%">NO</span></div>
<div class="c" style="left:1020.70px;top:328.98px"><span style="transform:scaleX(0.970);transform-origin:0 50%">NO</span></div>
<div class="a" style="left:109.00px;top:354.00px;width:1.00px;height:25.12px;background:#ebebeb"></div>
<div class="a" style="left:168.00px;top:354.00px;width:1.00px;height:25.12px;background:#ebebeb"></div>
<div class="a" style="left:240.00px;top:354.00px;width:1.00px;height:25.12px;background:#ebebeb"></div>
<div class="a" style="left:343.50px;top:354.00px;width:1.00px;height:25.12px;background:#ebebeb"></div>
<div class="a" style="left:434.75px;top:354.00px;width:1.00px;height:25.12px;background:#ebebeb"></div>
<div class="a" style="left:529.50px;top:354.00px;width:1.00px;height:25.12px;background:#ebebeb"></div>
<div class="a" style="left:628.00px;top:354.00px;width:1.00px;height:25.12px;background:#ebebeb"></div>
<div class="a" style="left:684.00px;top:354.00px;width:1.00px;height:25.12px;background:#ebebeb"></div>
<div class="a" style="left:785.25px;top:354.00px;width:1.00px;height:25.12px;background:#ebebeb"></div>
<div class="a" style="left:910.25px;top:354.00px;width:1.00px;height:25.12px;background:#ebebeb"></div>
<div class="a" style="left:1017.00px;top:354.00px;width:1.00px;height:25.12px;background:#ebebeb"></div>
<div class="c" style="left:36.50px;top:355.10px"><span style="transform:scaleX(1.022);transform-origin:0 50%">ID12104</span></div>
<div class="c" style="left:109.50px;top:355.10px;width:56.00px;text-align:right"><span style="transform:scaleX(1.030);transform-origin:100% 50%">23</span></div>
<div class="c" style="left:171.70px;top:355.10px"><span style="transform:scaleX(0.879);transform-origin:0 50%">FEMALE</span></div>
<div class="c" style="left:243.70px;top:355.10px"><span style="transform:scaleX(0.945);transform-origin:0 50%">TOWN</span></div>
<div class="c" style="left:344.00px;top:355.10px;width:88.25px;text-align:right"><span style="transform:scaleX(1.030);transform-origin:100% 50%">203754</span></div>
<div class="c" style="left:438.45px;top:355.10px"><span style="transform:scaleX(0.830);transform-origin:0 50%">YES</span></div>
<div class="c" style="left:530.00px;top:355.10px;width:95.50px;text-align:right"><span style="transform:scaleX(1.030);transform-origin:100% 50%">3</span></div>
<div class="c" style="left:631.70px;top:355.10px"><span style="transform:scaleX(0.970);transform-origin:0 50%">NO</span></div>
<div class="c" style="left:687.70px;top:355.10px"><span style="transform:scaleX(0.970);transform-origin:0 50%">NO</span></div>
<div class="c" style="left:788.95px;top:355.10px"><span style="transform:scaleX(0.830);transform-origin:0 50%">YES</span></div>
<div class="c" style="left:913.95px;top:355.10px"><span style="transform:scaleX(0.970);transform-origin:0 50%">NO</span></div>
<div class="c" style="left:1020.70px;top:355.10px"><span style="transform:scaleX(0.970);transform-origin:0 50%">NO</span></div>
<div class="a" style="left:33.30px;top:379.62px;width:1045.45px;height:26.12px;background:#daf2d0"></div>
<div class="a" style="left:33.30px;top:379.12px;width:1045.45px;height:1.00px;background:#c3e3b3"></div>
<div class="a" style="left:33.30px;top:405.25px;width:1045.45px;height:1.00px;background:#c3e3b3"></div>
<div class="c" style="left:36.50px;top:381.23px"><span style="transform:scaleX(1.022);transform-origin:0 50%">ID12105</span></div>
<div class="c" style="left:109.50px;top:381.23px;width:56.00px;text-align:right"><span style="transform:scaleX(1.030);transform-origin:100% 50%">57</span></div>
<div class="c" style="left:171.70px;top:381.23px"><span style="transform:scaleX(0.879);transform-origin:0 50%">FEMALE</span></div>
<div class="c" style="left:243.70px;top:381.23px"><span style="transform:scaleX(0.917);transform-origin:0 50%">RURAL</span></div>
<div class="c" style="left:344.00px;top:381.23px;width:88.25px;text-align:right"><span style="transform:scaleX(1.030);transform-origin:100% 50%">505763</span></div>
<div class="c" style="left:438.45px;top:381.23px"><span style="transform:scaleX(0.830);transform-origin:0 50%">YES</span></div>
<div class="c" style="left:530.00px;top:381.23px;width:95.50px;text-align:right"><span style="transform:scaleX(1.030);transform-origin:100% 50%">0</span></div>
<div class="c" style="left:631.70px;top:381.23px"><span style="transform:scaleX(0.970);transform-origin:0 50%">NO</span></div>
<div class="c" style="left:687.70px;top:381.23px"><span style="transform:scaleX(0.830);transform-origin:0 50%">YES</span></div>
<div class="c" style="left:788.95px;top:381.23px"><span style="transform:scaleX(0.970);transform-origin:0 50%">NO</span></div>
<div class="c" style="left:913.95px;top:381.23px"><span style="transform:scaleX(0.970);transform-origin:0 50%">NO</span></div>
<div class="c" style="left:1020.70px;top:381.23px"><span style="transform:scaleX(0.970);transform-origin:0 50%">NO</span></div>
<div class="a" style="left:109.00px;top:406.25px;width:1.00px;height:25.12px;background:#ebebeb"></div>
<div class="a" style="left:168.00px;top:406.25px;width:1.00px;height:25.12px;background:#ebebeb"></div>
<div class="a" style="left:240.00px;top:406.25px;width:1.00px;height:25.12px;background:#ebebeb"></div>
<div class="a" style="left:343.50px;top:406.25px;width:1.00px;height:25.12px;background:#ebebeb"></div>
<div class="a" style="left:434.75px;top:406.25px;width:1.00px;height:25.12px;background:#ebebeb"></div>
<div class="a" style="left:529.50px;top:406.25px;width:1.00px;height:25.12px;background:#ebebeb"></div>
<div class="a" style="left:628.00px;top:406.25px;width:1.00px;height:25.12px;background:#ebebeb"></div>
<div class="a" style="left:684.00px;top:406.25px;width:1.00px;height:25.12px;background:#ebebeb"></div>
<div class="a" style="left:785.25px;top:406.25px;width:1.00px;height:25.12px;background:#ebebeb"></div>
<div class="a" style="left:910.25px;top:406.25px;width:1.00px;height:25.12px;background:#ebebeb"></div>
<div class="a" style="left:1017.00px;top:406.25px;width:1.00px;height:25.12px;background:#ebebeb"></div>
<div class="a" style="left:785.75px;top:405.75px;width:125.00px;height:26.12px;background:#c6c6c6"></div>
<div class="a" style="left:910.75px;top:405.75px;width:106.75px;height:26.12px;background:#c6c6c6"></div>
<div class="c" style="left:36.50px;top:407.35px"><span style="transform:scaleX(1.022);transform-origin:0 50%">ID12106</span></div>
<div class="c" style="left:109.50px;top:407.35px;width:56.00px;text-align:right"><span style="transform:scaleX(1.030);transform-origin:100% 50%">57</span></div>
<div class="c" style="left:171.70px;top:407.35px"><span style="transform:scaleX(0.879);transform-origin:0 50%">FEMALE</span></div>
<div class="c" style="left:243.70px;top:407.35px"><span style="transform:scaleX(0.945);transform-origin:0 50%">TOWN</span></div>
<div class="c" style="left:344.00px;top:407.35px;width:88.25px;text-align:right"><span style="transform:scaleX(1.030);transform-origin:100% 50%">378696</span></div>
<div class="c" style="left:438.45px;top:407.35px"><span style="transform:scaleX(0.830);transform-origin:0 50%">YES</span></div>
<div class="c" style="left:530.00px;top:407.35px;width:95.50px;text-align:right"><span style="transform:scaleX(1.030);transform-origin:100% 50%">2</span></div>
<div class="c" style="left:631.70px;top:407.35px"><span style="transform:scaleX(0.970);transform-origin:0 50%">NO</span></div>
<div class="c" style="left:687.70px;top:407.35px"><span style="transform:scaleX(0.830);transform-origin:0 50%">YES</span></div>
<div class="c" style="left:788.95px;top:407.35px"><span style="transform:scaleX(0.830);transform-origin:0 50%">YES</span></div>
<div class="c" style="left:913.95px;top:407.35px"><span style="transform:scaleX(0.970);transform-origin:0 50%">NO</span></div>
<div class="c" style="left:1020.70px;top:407.35px"><span style="transform:scaleX(0.830);transform-origin:0 50%">YES</span></div>
<div class="a" style="left:33.30px;top:431.88px;width:1045.45px;height:26.12px;background:#daf2d0"></div>
<div class="a" style="left:33.30px;top:431.38px;width:1045.45px;height:1.00px;background:#c3e3b3"></div>
<div class="a" style="left:33.30px;top:457.50px;width:1045.45px;height:1.00px;background:#c3e3b3"></div>
<div class="a" style="left:684.50px;top:431.88px;width:101.25px;height:26.12px;background:#a9bf9e"></div>
<div class="a" style="left:684.50px;top:431.38px;width:101.25px;height:1.00px;background:#9fb793"></div>
<div class="a" style="left:684.50px;top:457.50px;width:101.25px;height:1.00px;background:#9fb793"></div>
<div class="a" style="left:785.75px;top:431.88px;width:125.00px;height:26.12px;background:#a9bf9e"></div>
<div class="a" style="left:785.75px;top:431.38px;width:125.00px;height:1.00px;background:#9fb793"></div>
<div class="a" style="left:785.75px;top:457.50px;width:125.00px;height:1.00px;background:#9fb793"></div>
<div class="a" style="left:910.75px;top:431.88px;width:106.75px;height:26.12px;background:#a9bf9e"></div>
<div class="a" style="left:910.75px;top:431.38px;width:106.75px;height:1.00px;background:#9fb793"></div>
<div class="a" style="left:910.75px;top:457.50px;width:106.75px;height:1.00px;background:#9fb793"></div>
<div class="c" style="left:36.50px;top:433.48px"><span style="transform:scaleX(1.022);transform-origin:0 50%">ID12107</span></div>
<div class="c" style="left:109.50px;top:433.48px;width:56.00px;text-align:right"><span style="transform:scaleX(1.030);transform-origin:100% 50%">22</span></div>
<div class="c" style="left:171.70px;top:433.48px"><span style="transform:scaleX(0.902);transform-origin:0 50%">MALE</span></div>
<div class="c" style="left:243.70px;top:433.48px"><span style="transform:scaleX(0.917);transform-origin:0 50%">RURAL</span></div>
<div class="c" style="left:344.00px;top:433.48px;width:88.25px;text-align:right"><span style="transform:scaleX(1.030);transform-origin:100% 50%">887707</span></div>
<div class="c" style="left:438.45px;top:433.48px"><span style="transform:scaleX(0.970);transform-origin:0 50%">NO</span></div>
<div class="c" style="left:530.00px;top:433.48px;width:95.50px;text-align:right"><span style="transform:scaleX(1.030);transform-origin:100% 50%">0</span></div>
<div class="c" style="left:631.70px;top:433.48px"><span style="transform:scaleX(0.970);transform-origin:0 50%">NO</span></div>
<div class="c" style="left:687.70px;top:433.48px"><span style="transform:scaleX(0.970);transform-origin:0 50%">NO</span></div>
<div class="c" style="left:788.95px;top:433.48px"><span style="transform:scaleX(0.830);transform-origin:0 50%">YES</span></div>
<div class="c" style="left:913.95px;top:433.48px"><span style="transform:scaleX(0.970);transform-origin:0 50%">NO</span></div>
<div class="c" style="left:1020.70px;top:433.48px"><span style="transform:scaleX(0.830);transform-origin:0 50%">YES</span></div>
<div class="a" style="left:109.00px;top:458.50px;width:1.00px;height:25.12px;background:#ebebeb"></div>
<div class="a" style="left:168.00px;top:458.50px;width:1.00px;height:25.12px;background:#ebebeb"></div>
<div class="a" style="left:240.00px;top:458.50px;width:1.00px;height:25.12px;background:#ebebeb"></div>
<div class="a" style="left:343.50px;top:458.50px;width:1.00px;height:25.12px;background:#ebebeb"></div>
<div class="a" style="left:434.75px;top:458.50px;width:1.00px;height:25.12px;background:#ebebeb"></div>
<div class="a" style="left:529.50px;top:458.50px;width:1.00px;height:25.12px;background:#ebebeb"></div>
<div class="a" style="left:628.00px;top:458.50px;width:1.00px;height:25.12px;background:#ebebeb"></div>
<div class="a" style="left:684.00px;top:458.50px;width:1.00px;height:25.12px;background:#ebebeb"></div>
<div class="a" style="left:785.25px;top:458.50px;width:1.00px;height:25.12px;background:#ebebeb"></div>
<div class="a" style="left:910.25px;top:458.50px;width:1.00px;height:25.12px;background:#ebebeb"></div>
<div class="a" style="left:1017.00px;top:458.50px;width:1.00px;height:25.12px;background:#ebebeb"></div>
<div class="a" style="left:684.50px;top:458.00px;width:101.25px;height:26.12px;background:#c6c6c6"></div>
<div class="a" style="left:785.75px;top:458.00px;width:125.00px;height:26.12px;background:#c6c6c6"></div>
<div class="a" style="left:910.75px;top:458.00px;width:106.75px;height:26.12px;background:#c6c6c6"></div>
<div class="c" style="left:36.50px;top:459.60px"><span style="transform:scaleX(1.022);transform-origin:0 50%">ID12108</span></div>
<div class="c" style="left:109.50px;top:459.60px;width:56.00px;text-align:right"><span style="transform:scaleX(1.030);transform-origin:100% 50%">58</span></div>
<div class="c" style="left:171.70px;top:459.60px"><span style="transform:scaleX(0.902);transform-origin:0 50%">MALE</span></div>
<div class="c" style="left:243.70px;top:459.60px"><span style="transform:scaleX(0.945);transform-origin:0 50%">TOWN</span></div>
<div class="c" style="left:344.00px;top:459.60px;width:88.25px;text-align:right"><span style="transform:scaleX(1.030);transform-origin:100% 50%">249466</span></div>
<div class="c" style="left:438.45px;top:459.60px"><span style="transform:scaleX(0.830);transform-origin:0 50%">YES</span></div>
<div class="c" style="left:530.00px;top:459.60px;width:95.50px;text-align:right"><span style="transform:scaleX(1.030);transform-origin:100% 50%">0</span></div>
<div class="c" style="left:631.70px;top:459.60px"><span style="transform:scaleX(0.830);transform-origin:0 50%">YES</span></div>
<div class="c" style="left:687.70px;top:459.60px"><span style="transform:scaleX(0.830);transform-origin:0 50%">YES</span></div>
<div class="c" style="left:788.95px;top:459.60px"><span style="transform:scaleX(0.830);transform-origin:0 50%">YES</span></div>
<div class="c" style="left:913.95px;top:459.60px"><span style="transform:scaleX(0.970);transform-origin:0 50%">NO</span></div>
<div class="c" style="left:1020.70px;top:459.60px"><span style="transform:scaleX(0.970);transform-origin:0 50%">NO</span></div>
<div class="a" style="left:33.30px;top:484.12px;width:1045.45px;height:26.12px;background:#daf2d0"></div>
<div class="a" style="left:33.30px;top:483.62px;width:1045.45px;height:1.00px;background:#c3e3b3"></div>
<div class="a" style="left:33.30px;top:509.75px;width:1045.45px;height:1.00px;background:#c3e3b3"></div>
<div class="a" style="left:684.50px;top:484.12px;width:101.25px;height:26.12px;background:#a9bf9e"></div>
<div class="a" style="left:684.50px;top:483.62px;width:101.25px;height:1.00px;background:#9fb793"></div>
<div class="a" style="left:684.50px;top:509.75px;width:101.25px;height:1.00px;background:#9fb793"></div>
<div class="a" style="left:785.75px;top:484.12px;width:125.00px;height:26.12px;background:#a9bf9e"></div>
<div class="a" style="left:785.75px;top:483.62px;width:125.00px;height:1.00px;background:#9fb793"></div>
<div class="a" style="left:785.75px;top:509.75px;width:125.00px;height:1.00px;background:#9fb793"></div>
<div class="a" style="left:910.75px;top:484.12px;width:106.75px;height:26.12px;background:#a9bf9e"></div>
<div class="a" style="left:910.75px;top:483.62px;width:106.75px;height:1.00px;background:#9fb793"></div>
<div class="a" style="left:910.75px;top:509.75px;width:106.75px;height:1.00px;background:#9fb793"></div>
<div class="c" style="left:36.50px;top:485.73px"><span style="transform:scaleX(1.022);transform-origin:0 50%">ID12109</span></div>
<div class="c" style="left:109.50px;top:485.73px;width:56.00px;text-align:right"><span style="transform:scaleX(1.030);transform-origin:100% 50%">37</span></div>
<div class="c" style="left:171.70px;top:485.73px"><span style="transform:scaleX(0.879);transform-origin:0 50%">FEMALE</span></div>
<div class="c" style="left:243.70px;top:485.73px"><span style="transform:scaleX(0.915);transform-origin:0 50%">SUBURBAN</span></div>
<div class="c" style="left:344.00px;top:485.73px;width:88.25px;text-align:right"><span style="transform:scaleX(1.030);transform-origin:100% 50%">253043</span></div>
<div class="c" style="left:438.45px;top:485.73px"><span style="transform:scaleX(0.830);transform-origin:0 50%">YES</span></div>
<div class="c" style="left:530.00px;top:485.73px;width:95.50px;text-align:right"><span style="transform:scaleX(1.030);transform-origin:100% 50%">2</span></div>
<div class="c" style="left:631.70px;top:485.73px"><span style="transform:scaleX(0.830);transform-origin:0 50%">YES</span></div>
<div class="c" style="left:687.70px;top:485.73px"><span style="transform:scaleX(0.970);transform-origin:0 50%">NO</span></div>
<div class="c" style="left:788.95px;top:485.73px"><span style="transform:scaleX(0.970);transform-origin:0 50%">NO</span></div>
<div class="c" style="left:913.95px;top:485.73px"><span style="transform:scaleX(0.970);transform-origin:0 50%">NO</span></div>
<div class="c" style="left:1020.70px;top:485.73px"><span style="transform:scaleX(0.970);transform-origin:0 50%">NO</span></div>
<div class="a" style="left:109.00px;top:510.75px;width:1.00px;height:25.12px;background:#ebebeb"></div>
<div class="a" style="left:168.00px;top:510.75px;width:1.00px;height:25.12px;background:#ebebeb"></div>
<div class="a" style="left:240.00px;top:510.75px;width:1.00px;height:25.12px;background:#ebebeb"></div>
<div class="a" style="left:343.50px;top:510.75px;width:1.00px;height:25.12px;background:#ebebeb"></div>
<div class="a" style="left:434.75px;top:510.75px;width:1.00px;height:25.12px;background:#ebebeb"></div>
<div class="a" style="left:529.50px;top:510.75px;width:1.00px;height:25.12px;background:#ebebeb"></div>
<div class="a" style="left:628.00px;top:510.75px;width:1.00px;height:25.12px;background:#ebebeb"></div>
<div class="a" style="left:684.00px;top:510.75px;width:1.00px;height:25.12px;background:#ebebeb"></div>
<div class="a" style="left:785.25px;top:510.75px;width:1.00px;height:25.12px;background:#ebebeb"></div>
<div class="a" style="left:910.25px;top:510.75px;width:1.00px;height:25.12px;background:#ebebeb"></div>
<div class="a" style="left:1017.00px;top:510.75px;width:1.00px;height:25.12px;background:#ebebeb"></div>
<div class="a" style="left:684.50px;top:510.25px;width:101.25px;height:26.12px;background:#c6c6c6"></div>
<div class="a" style="left:785.75px;top:510.25px;width:125.00px;height:26.12px;background:#c6c6c6"></div>
<div class="a" style="left:910.75px;top:510.25px;width:106.75px;height:26.12px;background:#c6c6c6"></div>
<div class="c" style="left:36.50px;top:511.85px"><span style="transform:scaleX(1.043);transform-origin:0 50%">ID12110</span></div>
<div class="c" style="left:109.50px;top:511.85px;width:56.00px;text-align:right"><span style="transform:scaleX(1.030);transform-origin:100% 50%">54</span></div>
<div class="c" style="left:171.70px;top:511.85px"><span style="transform:scaleX(0.902);transform-origin:0 50%">MALE</span></div>
<div class="c" style="left:243.70px;top:511.85px"><span style="transform:scaleX(0.945);transform-origin:0 50%">TOWN</span></div>
<div class="c" style="left:344.00px;top:511.85px;width:88.25px;text-align:right"><span style="transform:scaleX(1.030);transform-origin:100% 50%">242121</span></div>
<div class="c" style="left:438.45px;top:511.85px"><span style="transform:scaleX(0.830);transform-origin:0 50%">YES</span></div>
<div class="c" style="left:530.00px;top:511.85px;width:95.50px;text-align:right"><span style="transform:scaleX(1.030);transform-origin:100% 50%">2</span></div>
<div class="c" style="left:631.70px;top:511.85px"><span style="transform:scaleX(0.830);transform-origin:0 50%">YES</span></div>
<div class="c" style="left:687.70px;top:511.85px"><span style="transform:scaleX(0.830);transform-origin:0 50%">YES</span></div>
<div class="c" style="left:788.95px;top:511.85px"><span style="transform:scaleX(0.830);transform-origin:0 50%">YES</span></div>
<div class="c" style="left:913.95px;top:511.85px"><span style="transform:scaleX(0.970);transform-origin:0 50%">NO</span></div>
<div class="c" style="left:1020.70px;top:511.85px"><span style="transform:scaleX(0.970);transform-origin:0 50%">NO</span></div>
<div class="a" style="left:33.30px;top:536.38px;width:1045.45px;height:26.12px;background:#daf2d0"></div>
<div class="a" style="left:33.30px;top:535.88px;width:1045.45px;height:1.00px;background:#c3e3b3"></div>
<div class="a" style="left:33.30px;top:562.00px;width:1045.45px;height:1.00px;background:#c3e3b3"></div>
<div class="c" style="left:36.50px;top:537.98px"><span style="transform:scaleX(1.064);transform-origin:0 50%">ID12111</span></div>
<div class="c" style="left:109.50px;top:537.98px;width:56.00px;text-align:right"><span style="transform:scaleX(1.030);transform-origin:100% 50%">66</span></div>
<div class="c" style="left:171.70px;top:537.98px"><span style="transform:scaleX(0.879);transform-origin:0 50%">FEMALE</span></div>
<div class="c" style="left:243.70px;top:537.98px"><span style="transform:scaleX(0.945);transform-origin:0 50%">TOWN</span></div>
<div class="c" style="left:344.00px;top:537.98px;width:88.25px;text-align:right"><span style="transform:scaleX(1.030);transform-origin:100% 50%">598039</span></div>
<div class="c" style="left:438.45px;top:537.98px"><span style="transform:scaleX(0.830);transform-origin:0 50%">YES</span></div>
<div class="c" style="left:530.00px;top:537.98px;width:95.50px;text-align:right"><span style="transform:scaleX(1.030);transform-origin:100% 50%">0</span></div>
<div class="c" style="left:631.70px;top:537.98px"><span style="transform:scaleX(0.970);transform-origin:0 50%">NO</span></div>
<div class="c" style="left:687.70px;top:537.98px"><span style="transform:scaleX(0.830);transform-origin:0 50%">YES</span></div>
<div class="c" style="left:788.95px;top:537.98px"><span style="transform:scaleX(0.830);transform-origin:0 50%">YES</span></div>
<div class="c" style="left:913.95px;top:537.98px"><span style="transform:scaleX(0.970);transform-origin:0 50%">NO</span></div>
<div class="c" style="left:1020.70px;top:537.98px"><span style="transform:scaleX(0.970);transform-origin:0 50%">NO</span></div>
<div class="a" style="left:109.00px;top:563.00px;width:1.00px;height:25.12px;background:#ebebeb"></div>
<div class="a" style="left:168.00px;top:563.00px;width:1.00px;height:25.12px;background:#ebebeb"></div>
<div class="a" style="left:240.00px;top:563.00px;width:1.00px;height:25.12px;background:#ebebeb"></div>
<div class="a" style="left:343.50px;top:563.00px;width:1.00px;height:25.12px;background:#ebebeb"></div>
<div class="a" style="left:434.75px;top:563.00px;width:1.00px;height:25.12px;background:#ebebeb"></div>
<div class="a" style="left:529.50px;top:563.00px;width:1.00px;height:25.12px;background:#ebebeb"></div>
<div class="a" style="left:628.00px;top:563.00px;width:1.00px;height:25.12px;background:#ebebeb"></div>
<div class="a" style="left:684.00px;top:563.00px;width:1.00px;height:25.12px;background:#ebebeb"></div>
<div class="a" style="left:785.25px;top:563.00px;width:1.00px;height:25.12px;background:#ebebeb"></div>
<div class="a" style="left:910.25px;top:563.00px;width:1.00px;height:25.12px;background:#ebebeb"></div>
<div class="a" style="left:1017.00px;top:563.00px;width:1.00px;height:25.12px;background:#ebebeb"></div>
<div class="c" style="left:36.50px;top:564.10px"><span style="transform:scaleX(1.043);transform-origin:0 50%">ID12112</span></div>
<div class="c" style="left:109.50px;top:564.10px;width:56.00px;text-align:right"><span style="transform:scaleX(1.030);transform-origin:100% 50%">52</span></div>
<div class="c" style="left:171.70px;top:564.10px"><span style="transform:scaleX(0.879);transform-origin:0 50%">FEMALE</span></div>
<div class="c" style="left:243.70px;top:564.10px"><span style="transform:scaleX(0.916);transform-origin:0 50%">INNER_CITY</span></div>
<div class="c" style="left:344.00px;top:564.10px;width:88.25px;text-align:right"><span style="transform:scaleX(1.030);transform-origin:100% 50%">266588</span></div>
<div class="c" style="left:438.45px;top:564.10px"><span style="transform:scaleX(0.970);transform-origin:0 50%">NO</span></div>
<div class="c" style="left:530.00px;top:564.10px;width:95.50px;text-align:right"><span style="transform:scaleX(1.030);transform-origin:100% 50%">0</span></div>
<div class="c" style="left:631.70px;top:564.10px"><span style="transform:scaleX(0.830);transform-origin:0 50%">YES</span></div>
<div class="c" style="left:687.70px;top:564.10px"><span style="transform:scaleX(0.830);transform-origin:0 50%">YES</span></div>
<div class="c" style="left:788.95px;top:564.10px"><span style="transform:scaleX(0.830);transform-origin:0 50%">YES</span></div>
<div class="c" style="left:913.95px;top:564.10px"><span style="transform:scaleX(0.830);transform-origin:0 50%">YES</span></div>
<div class="c" style="left:1020.70px;top:564.10px"><span style="transform:scaleX(0.970);transform-origin:0 50%">NO</span></div>
<div class="a" style="left:33.30px;top:588.62px;width:1045.45px;height:26.12px;background:#daf2d0"></div>
<div class="a" style="left:33.30px;top:588.12px;width:1045.45px;height:1.00px;background:#c3e3b3"></div>
<div class="a" style="left:33.30px;top:614.25px;width:1045.45px;height:1.00px;background:#c3e3b3"></div>
<div class="c" style="left:36.50px;top:590.23px"><span style="transform:scaleX(1.043);transform-origin:0 50%">ID12113</span></div>
<div class="c" style="left:109.50px;top:590.23px;width:56.00px;text-align:right"><span style="transform:scaleX(1.030);transform-origin:100% 50%">44</span></div>
<div class="c" style="left:171.70px;top:590.23px"><span style="transform:scaleX(0.879);transform-origin:0 50%">FEMALE</span></div>
<div class="c" style="left:243.70px;top:590.23px"><span style="transform:scaleX(0.945);transform-origin:0 50%">TOWN</span></div>
<div class="c" style="left:344.00px;top:590.23px;width:88.25px;text-align:right"><span style="transform:scaleX(1.030);transform-origin:100% 50%">157358</span></div>
<div class="c" style="left:438.45px;top:590.23px"><span style="transform:scaleX(0.830);transform-origin:0 50%">YES</span></div>
<div class="c" style="left:530.00px;top:590.23px;width:95.50px;text-align:right"><span style="transform:scaleX(1.030);transform-origin:100% 50%">1</span></div>
<div class="c" style="left:631.70px;top:590.23px"><span style="transform:scaleX(0.970);transform-origin:0 50%">NO</span></div>
<div class="c" style="left:687.70px;top:590.23px"><span style="transform:scaleX(0.830);transform-origin:0 50%">YES</span></div>
<div class="c" style="left:788.95px;top:590.23px"><span style="transform:scaleX(0.830);transform-origin:0 50%">YES</span></div>
<div class="c" style="left:913.95px;top:590.23px"><span style="transform:scaleX(0.830);transform-origin:0 50%">YES</span></div>
<div class="c" style="left:1020.70px;top:590.23px"><span style="transform:scaleX(0.830);transform-origin:0 50%">YES</span></div>
<div class="a" style="left:109.00px;top:615.25px;width:1.00px;height:25.12px;background:#ebebeb"></div>
<div class="a" style="left:168.00px;top:615.25px;width:1.00px;height:25.12px;background:#ebebeb"></div>
<div class="a" style="left:240.00px;top:615.25px;width:1.00px;height:25.12px;background:#ebebeb"></div>
<div class="a" style="left:343.50px;top:615.25px;width:1.00px;height:25.12px;background:#ebebeb"></div>
<div class="a" style="left:434.75px;top:615.25px;width:1.00px;height:25.12px;background:#ebebeb"></div>
<div class="a" style="left:529.50px;top:615.25px;width:1.00px;height:25.12px;background:#ebebeb"></div>
<div class="a" style="left:628.00px;top:615.25px;width:1.00px;height:25.12px;background:#ebebeb"></div>
<div class="a" style="left:684.00px;top:615.25px;width:1.00px;height:25.12px;background:#ebebeb"></div>
<div class="a" style="left:785.25px;top:615.25px;width:1.00px;height:25.12px;background:#ebebeb"></div>
<div class="a" style="left:910.25px;top:615.25px;width:1.00px;height:25.12px;background:#ebebeb"></div>
<div class="a" style="left:1017.00px;top:615.25px;width:1.00px;height:25.12px;background:#ebebeb"></div>
<div class="c" style="left:36.50px;top:616.35px"><span style="transform:scaleX(1.043);transform-origin:0 50%">ID12114</span></div>
<div class="c" style="left:109.50px;top:616.35px;width:56.00px;text-align:right"><span style="transform:scaleX(1.030);transform-origin:100% 50%">66</span></div>
<div class="c" style="left:171.70px;top:616.35px"><span style="transform:scaleX(0.879);transform-origin:0 50%">FEMALE</span></div>
<div class="c" style="left:243.70px;top:616.35px"><span style="transform:scaleX(0.945);transform-origin:0 50%">TOWN</span></div>
<div class="c" style="left:344.00px;top:616.35px;width:88.25px;text-align:right"><span style="transform:scaleX(1.030);transform-origin:100% 50%">552047</span></div>
<div class="c" style="left:438.45px;top:616.35px"><span style="transform:scaleX(0.830);transform-origin:0 50%">YES</span></div>
<div class="c" style="left:530.00px;top:616.35px;width:95.50px;text-align:right"><span style="transform:scaleX(1.030);transform-origin:100% 50%">1</span></div>
<div class="c" style="left:631.70px;top:616.35px"><span style="transform:scaleX(0.830);transform-origin:0 50%">YES</span></div>
<div class="c" style="left:687.70px;top:616.35px"><span style="transform:scaleX(0.830);transform-origin:0 50%">YES</span></div>
<div class="c" style="left:788.95px;top:616.35px"><span style="transform:scaleX(0.830);transform-origin:0 50%">YES</span></div>
<div class="c" style="left:913.95px;top:616.35px"><span style="transform:scaleX(0.830);transform-origin:0 50%">YES</span></div>
<div class="c" style="left:1020.70px;top:616.35px"><span style="transform:scaleX(0.830);transform-origin:0 50%">YES</span></div>
<div class="a" style="left:33.30px;top:640.88px;width:1045.45px;height:26.12px;background:#daf2d0"></div>
<div class="a" style="left:33.30px;top:640.38px;width:1045.45px;height:1.00px;background:#c3e3b3"></div>
<div class="a" style="left:33.30px;top:666.50px;width:1045.45px;height:1.00px;background:#c3e3b3"></div>
<div class="c" style="left:36.50px;top:642.48px"><span style="transform:scaleX(1.043);transform-origin:0 50%">ID12115</span></div>
<div class="c" style="left:109.50px;top:642.48px;width:56.00px;text-align:right"><span style="transform:scaleX(1.030);transform-origin:100% 50%">36</span></div>
<div class="c" style="left:171.70px;top:642.48px"><span style="transform:scaleX(0.902);transform-origin:0 50%">MALE</span></div>
<div class="c" style="left:243.70px;top:642.48px"><span style="transform:scaleX(0.917);transform-origin:0 50%">RURAL</span></div>
<div class="c" style="left:344.00px;top:642.48px;width:88.25px;text-align:right"><span style="transform:scaleX(1.030);transform-origin:100% 50%">194746</span></div>
<div class="c" style="left:438.45px;top:642.48px"><span style="transform:scaleX(0.830);transform-origin:0 50%">YES</span></div>
<div class="c" style="left:530.00px;top:642.48px;width:95.50px;text-align:right"><span style="transform:scaleX(1.030);transform-origin:100% 50%">0</span></div>
<div class="c" style="left:631.70px;top:642.48px"><span style="transform:scaleX(0.970);transform-origin:0 50%">NO</span></div>
<div class="c" style="left:687.70px;top:642.48px"><span style="transform:scaleX(0.830);transform-origin:0 50%">YES</span></div>
<div class="c" style="left:788.95px;top:642.48px"><span style="transform:scaleX(0.830);transform-origin:0 50%">YES</span></div>
<div class="c" style="left:913.95px;top:642.48px"><span style="transform:scaleX(0.830);transform-origin:0 50%">YES</span></div>
<div class="c" style="left:1020.70px;top:642.48px"><span style="transform:scaleX(0.970);transform-origin:0 50%">NO</span></div>
<div class="a" style="left:33.30px;top:667.50px;width:1045.45px;height:0.50px;background:#c3e3b3"></div>
<div class="a" style="left:1078.25px;top:249.00px;width:1.00px;height:419.00px;background:#c3e3b3"></div>
<div class="a" style="left:683.20px;top:404.30px;width:335.70px;height:2.00px;background:#1e6e3e"></div>
<div class="a" style="left:683.20px;top:535.90px;width:335.70px;height:2.00px;background:#1e6e3e"></div>
<div class="a" style="left:683.20px;top:404.30px;width:2.00px;height:133.60px;background:#1e6e3e"></div>
<div class="a" style="left:1016.90px;top:404.30px;width:2.00px;height:133.60px;background:#1e6e3e"></div>
<div class="a" style="left:1014.80px;top:533.80px;width:5.00px;height:5.00px;background:#1e6e3e"></div>
<div class="a" style="left:669.00px;top:389.50px;width:370.60px;height:164.40px;border:3.5px solid #ee3030"></div>
<svg style="left:747.00px;top:341.00px" width="22" height="35" viewBox="750 345 22 35"><path d="M762.8 349.1 H768 V377.8 H762.1 V357.5 Q758.5 360 755 361 V355.5 Q760 352.5 762.8 349.1 Z" fill="#f23232"/></svg>
</div></body></html>
